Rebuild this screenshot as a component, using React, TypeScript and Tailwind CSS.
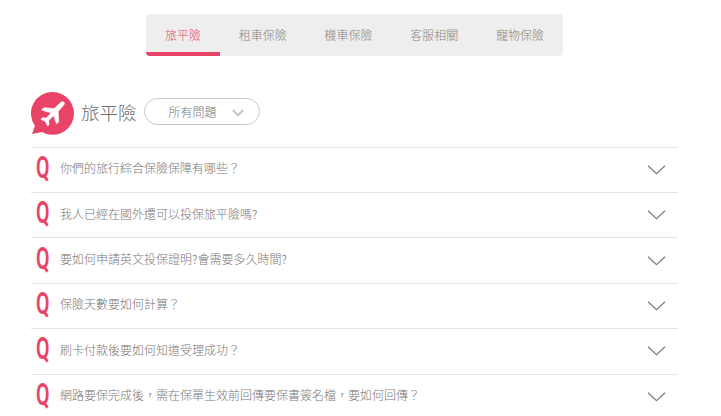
import { useState } from "react"

const tabs = ["旅平險", "租車保險", "機車保險", "客服相關", "寵物保險"]

const questions = [
    "你們的旅行綜合保險保障有哪些？",
    "我人已經在國外還可以投保旅平險嗎?",
    "要如何申請英文投保證明?會需要多久時間?",
    "保險天數要如何計算？",
    "刷卡付款後要如何知道受理成功？",
    "網路要保完成後，需在保單生效前回傳要保書簽名檔，要如何回傳？",
]

const PlaneBadge: React.FC = () => (
    <svg width="44" height="44" viewBox="0 0 44 44" className="shrink-0">
        <path d="M21.6 0a21.4 21.4 0 1 1-10.6 40L1 42l2.9-8.2A21.4 21.4 0 0 1 21.6 0z" fill="#e94367" />
        <path
            d="M32.7 10c.9.8.9 1.9.1 3l-5.6 6.5.5 10.3-2 2.3-3.2-8.6-4.7 5 .2 4.2-1.6 1.2-2-4.4-4.3-2 1-1.7 4.2.3 4.8-5-9.5-3.2 2.2-2.2 10.4.8 6.4-6c1.1-.9 2.4-1.1 3.1-.5z"
            fill="#fff"
            stroke="#fff"
            strokeWidth="0.6"
            strokeLinejoin="round"
        />
    </svg>
)

const TabBar: React.FC<{ active: number; onChange: (index: number) => void }> = ({ active, onChange }) => (
    <nav className="ml-[146px] flex h-[42px] w-[417px] overflow-hidden rounded bg-[#eeeeee]">
        {tabs.map((tab, index) => (
            <button
                key={tab}
                onClick={() => onChange(index)}
                className={
                    index === active
                        ? "w-[74px] shrink-0 border-b-4 border-[#e94367] pt-1 text-[#e94367]"
                        : "flex-1 border-b-4 border-transparent pt-1 text-[#858585]"
                }
            >
                {tab}
            </button>
        ))}
    </nav>
)

const QuestionRow: React.FC<{ question: string }> = ({ question }) => (
    <li className="flex h-[45.4px] items-center border-t border-[#e4e4e4] pl-[5px] pr-3">
        <span className="w-6 shrink-0">
            <span className="-mt-1 block w-[14px] origin-left scale-x-[0.63] font-[Roboto] text-[31px] font-semibold leading-9 text-[#e94367]">
                Q
            </span>
        </span>
        <span className="-mt-[3px] flex-1 whitespace-nowrap">{question}</span>
        <svg width="19" height="10" viewBox="0 0 19 10" fill="none" stroke="#7c7c7c" strokeWidth="1.2">
            <path d="M1 .8l8.5 8L18 .8" />
        </svg>
    </li>
)

export default function App() {
    const [active, setActive] = useState(0)

    return (
        <div className="h-[416px] overflow-hidden bg-white pt-[14px] font-['Noto_Sans_CJK_TC',sans-serif] text-xs font-light text-[#777777]">
            <TabBar active={active} onChange={setActive} />

            <main className="ml-[31px] mt-9 w-[647px]">
                <header className="flex h-[54.6px] items-start">
                    <PlaneBadge />
                    <h1 className="ml-[6px] mt-[6px] text-[18.5px] leading-7 text-[#6c6c6c]">旅平險</h1>
                    <button className="ml-[7px] mt-[6px] flex h-[27px] w-[116px] items-center rounded-full border border-[#c7c7c7] pl-6">
                        所有問題
                        <svg width="12" height="8" viewBox="0 0 12 8" fill="none" stroke="#c4c4c4" strokeWidth="2" className="ml-[15px] mt-0.5">
                            <path d="M.8 1L6 6.3 11.2 1" />
                        </svg>
                    </button>
                </header>
                <ul>
                    {questions.map((question) => (
                        <QuestionRow key={question} question={question} />
                    ))}
                </ul>
            </main>
        </div>
    )
}
